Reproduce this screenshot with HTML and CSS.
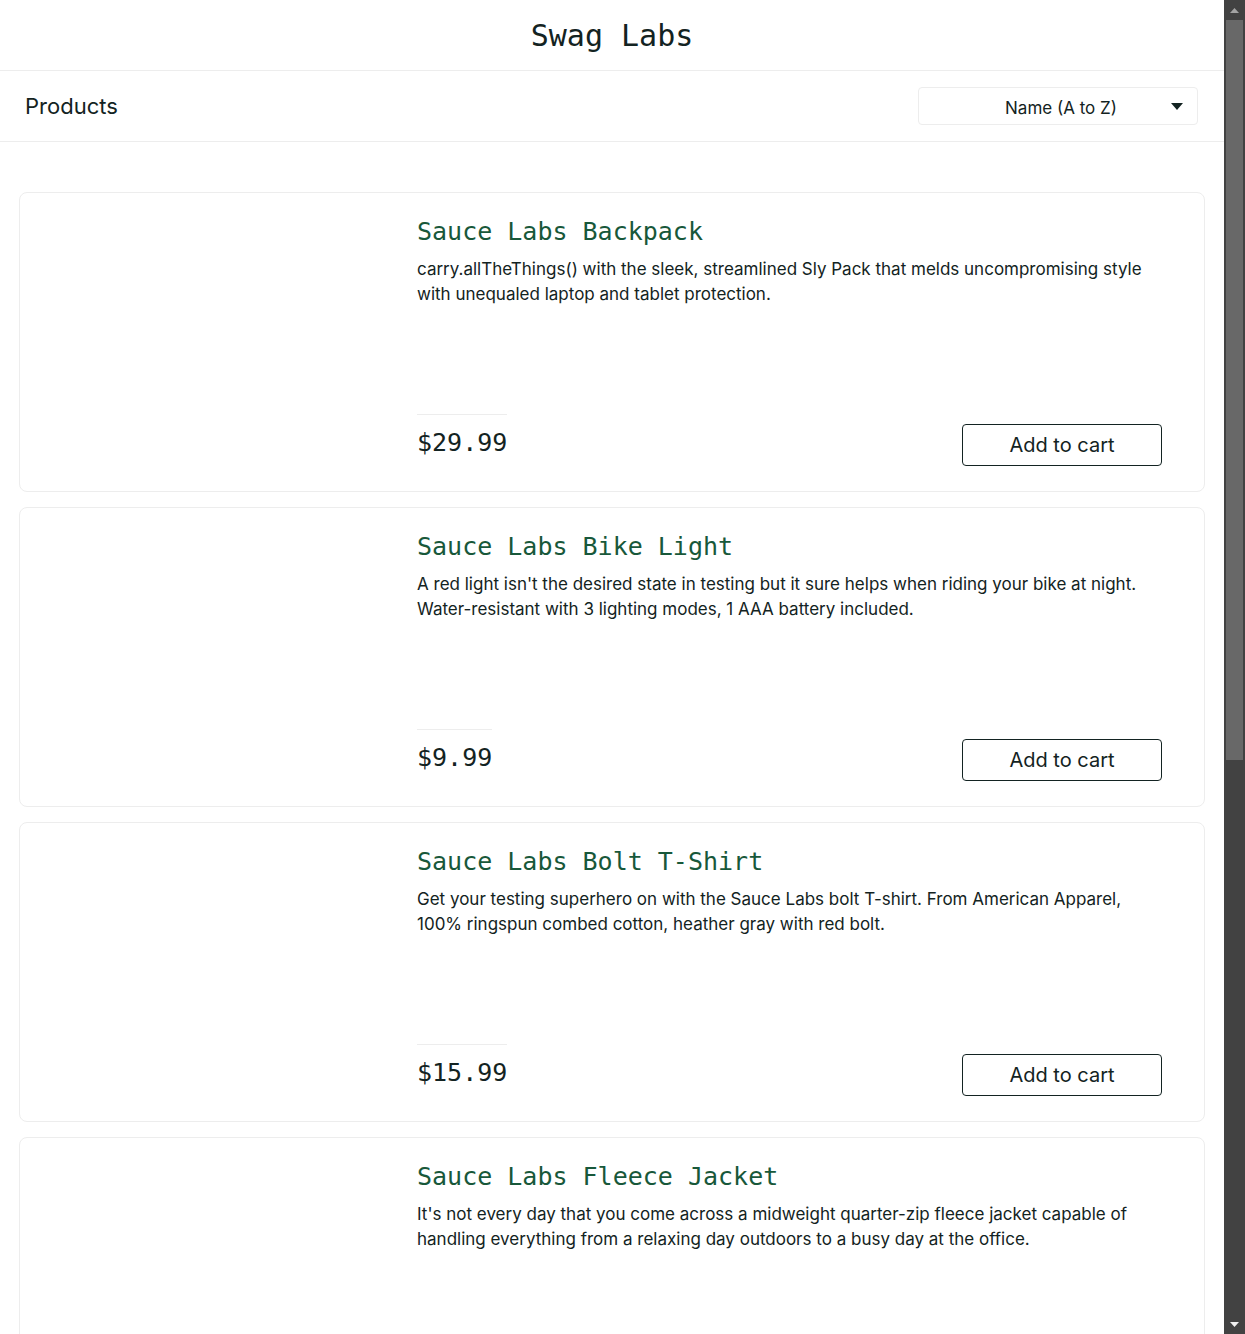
FILE: index.html
```html
<!DOCTYPE html>
<html lang="en">
<head>
<meta charset="utf-8">
<title>Swag Labs</title>
<link rel="stylesheet" href="styles.css">
</head>
<body>
<div class="app">
  <div class="page">
    <header class="header">
      <div class="app-logo">Swag Labs</div>
    </header>
    <div class="subheader">
      <span class="title">Products</span>
      <div class="sort">
        <span class="sort-text">Name (A to Z)</span>
        <svg class="sort-arrow" width="12" height="7" viewBox="0 0 12 7"><path d="M0 0h12L6 7z" fill="#132322"/></svg>
      </div>
    </div>
    <main class="inventory">
      <div class="item">
        <div class="item-img"></div>
        <div class="item-body">
          <div class="item-label">
            <div class="item-name">Sauce Labs Backpack</div>
            <div class="item-desc">carry.allTheThings() with the sleek, streamlined Sly Pack that melds uncompromising style with unequaled laptop and tablet protection.</div>
          </div>
          <div class="price-bar">
            <div class="price">$29.99</div>
            <button class="btn">Add to cart</button>
          </div>
        </div>
      </div>
      <div class="item">
        <div class="item-img"></div>
        <div class="item-body">
          <div class="item-label">
            <div class="item-name">Sauce Labs Bike Light</div>
            <div class="item-desc">A red light isn't the desired state in testing but it sure helps when riding your bike at night. Water-resistant with 3 lighting modes, 1 AAA battery included.</div>
          </div>
          <div class="price-bar">
            <div class="price">$9.99</div>
            <button class="btn">Add to cart</button>
          </div>
        </div>
      </div>
      <div class="item">
        <div class="item-img"></div>
        <div class="item-body">
          <div class="item-label">
            <div class="item-name">Sauce Labs Bolt T-Shirt</div>
            <div class="item-desc">Get your testing superhero on with the Sauce Labs bolt T-shirt. From American Apparel, 100% ringspun combed cotton, heather gray with red bolt.</div>
          </div>
          <div class="price-bar">
            <div class="price">$15.99</div>
            <button class="btn">Add to cart</button>
          </div>
        </div>
      </div>
      <div class="item">
        <div class="item-img"></div>
        <div class="item-body">
          <div class="item-label">
            <div class="item-name">Sauce Labs Fleece Jacket</div>
            <div class="item-desc">It's not every day that you come across a midweight quarter-zip fleece jacket capable of handling everything from a relaxing day outdoors to a busy day at the office.</div>
          </div>
          <div class="price-bar">
            <div class="price">$49.99</div>
            <button class="btn">Add to cart</button>
          </div>
        </div>
      </div>
    </main>
  </div>
  <div class="scrollbar" aria-hidden="true">
    <div class="sb-btn"><svg width="9" height="5" viewBox="0 0 9 5"><path d="M4.5 0L9 5H0z" fill="#a3a3a3"/></svg></div>
    <div class="sb-thumb"></div>
    <div class="sb-track"></div>
    <div class="sb-btn"><svg width="9" height="5" viewBox="0 0 9 5"><path d="M0 0h9L4.5 5z" fill="#f0f0f0"/></svg></div>
  </div>
</div>
</body>
</html>
```

FILE: styles.css
```css
* { box-sizing: border-box; }
html, body { margin: 0; padding: 0; }
body {
  font-family: "Inter", "DejaVu Sans", sans-serif;
  color: #132322;
  background: #fff;
}
.app {
  display: flex;
  height: 100vh;
  overflow: hidden;
}
.page {
  flex: 1;
  min-width: 0;
}
.header {
  height: 71px;
  border-bottom: 1px solid #ededed;
  display: flex;
  align-items: center;
  justify-content: center;
}
.app-logo {
  font-family: "DejaVu Sans Mono", monospace;
  font-size: 30px;
  line-height: 34px;
  margin-top: 2px;
  color: #132322;
}
.subheader {
  height: 71px;
  border-bottom: 1px solid #ededed;
  display: flex;
  align-items: center;
  justify-content: space-between;
  padding: 0 26px 0 25px;
}
.title {
  font-size: 22px;
  font-weight: 400;
  margin-top: -1px;
}
.sort {
  width: 280px;
  height: 38px;
  border: 1px solid #ededed;
  border-radius: 4px;
  display: flex;
  align-items: center;
  padding: 0 14px 0 40px;
}
.sort-text {
  flex: 1;
  text-align: center;
  font-size: 17px;
  margin: 3px 8px 0 0;
}
.sort-arrow { display: block; }
.inventory {
  padding: 50px 19px 0 19px;
  display: flex;
  flex-direction: column;
  gap: 15px;
}
.item {
  height: 300px;
  border: 1px solid #ededed;
  border-radius: 8px;
  display: flex;
  padding: 24px 42px 25px 20px;
}
.item-img {
  width: 377px;
  flex: none;
}
.item-body {
  flex: 1;
  display: flex;
  flex-direction: column;
  justify-content: space-between;
}
.item-name {
  font-family: "DejaVu Sans Mono", monospace;
  font-size: 25px;
  line-height: 30px;
  color: #18583a;
}
.item-desc {
  margin-top: 10px;
  font-size: 17px;
  line-height: 25px;
}
.price-bar {
  display: flex;
  justify-content: space-between;
  align-items: flex-start;
}
.price {
  border-top: 1px solid #ededed;
  padding-top: 13px;
  font-family: "DejaVu Sans Mono", monospace;
  font-size: 25px;
  line-height: 30px;
}
.btn {
  margin-top: 10px;
  width: 200px;
  height: 42px;
  border: 1px solid #132322;
  border-radius: 4px;
  background: #fff;
  color: #132322;
  font-family: "Inter", sans-serif;
  font-size: 20px;
  padding: 0;
}
.scrollbar {
  width: 21px;
  flex: none;
  background: #424242;
  display: flex;
  flex-direction: column;
}
.sb-btn {
  height: 20px;
  display: flex;
  align-items: center;
  justify-content: center;
}
.sb-thumb {
  height: 740px;
  margin: 0 2px;
  background: #686868;
}
.sb-track { flex: 1; }
```
